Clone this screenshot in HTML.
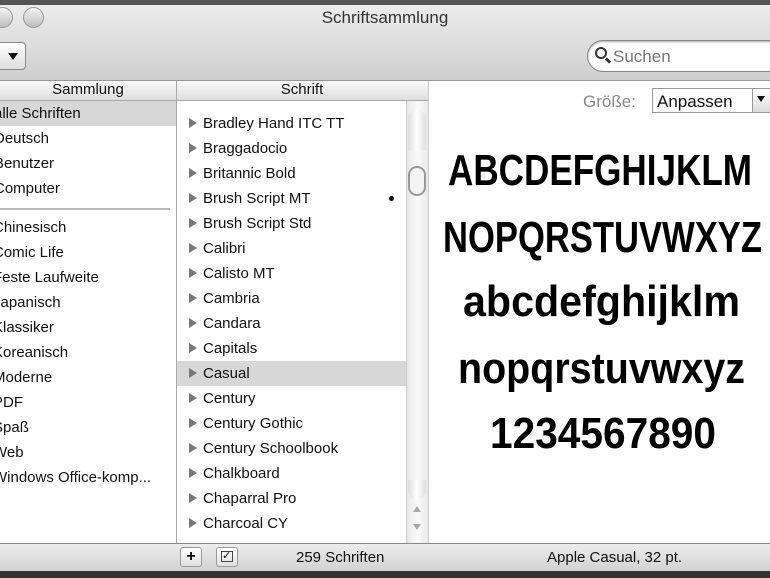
<!DOCTYPE html><html><head><style>
body{margin:0;width:770px;height:578px;overflow:hidden;background:#fff;font-family:"Liberation Sans",sans-serif;position:relative}
div,svg{position:absolute;box-sizing:border-box}
.t{font-size:15px;color:#111;white-space:nowrap}
.tri{display:inline-block;width:0;height:0;border-left:8px solid #777;border-top:5px solid transparent;border-bottom:5px solid transparent;margin-right:6px;vertical-align:0}
</style></head><body>
<div style="left:0;top:0;width:770px;height:6px;background:#555"></div>
<div style="left:0;top:5px;width:770px;height:76px;background:linear-gradient(#ececec,#cfcfcf);border-bottom:1px solid #999"></div>
<div style="left:-8px;top:7px;width:21px;height:21px;border-radius:50%;background:linear-gradient(#f4f4f4,#bdbdbd);border:1px solid #999"></div>
<div style="left:23px;top:7px;width:21px;height:21px;border-radius:50%;background:linear-gradient(#f4f4f4,#bdbdbd);border:1px solid #999"></div>
<div class="t" style="left:0;width:770px;top:8px;text-align:center;font-size:17px;color:#333">Schriftsammlung</div>
<div style="left:-6px;top:42px;width:32px;height:28px;border:1px solid #888;border-radius:4px;background:linear-gradient(#fff,#ddd)"></div>
<div style="left:8px;top:53px;border-left:5px solid transparent;border-right:5px solid transparent;border-top:7px solid #111"></div>
<div style="left:587px;top:40px;width:200px;height:32px;border:1px solid #888;border-radius:16px;background:#fff;box-shadow:inset 0 1px 2px #aaa"></div>
<div style="left:595px;top:47px;width:12px;height:12px;border:2px solid #333;border-radius:50%"></div>
<div style="left:605px;top:59px;width:6px;height:3px;background:#333;transform:rotate(45deg)"></div>
<div class="t" style="left:613px;top:47px;font-size:17px;color:#777">Suchen</div>
<div style="left:0;top:81px;width:428px;height:20px;background:linear-gradient(#fafafa,#dedede);border-bottom:1px solid #aaa"></div>
<div style="left:176px;top:81px;width:1px;height:462px;background:#aaa"></div>
<div style="left:428px;top:81px;width:1px;height:462px;background:#ccc"></div>
<div class="t" style="left:0;width:176px;top:81px;text-align:center">Sammlung</div>
<div class="t" style="left:176px;width:252px;top:81px;text-align:center">Schrift</div>
<div style="left:0;top:101px;width:176px;height:25px;background:#d7d7d7"></div>
<div class="t" style="left:-6px;top:101px;line-height:25px">
<div style="position:static">alle Schriften</div><div style="position:static">Deutsch</div><div style="position:static">Benutzer</div><div style="position:static">Computer</div></div>
<div style="left:0;top:208px;width:170px;height:2px;background:#bbb"></div>
<div class="t" style="left:-7px;top:215px;line-height:25px">
<div style="position:static">Chinesisch</div><div style="position:static">Comic Life</div><div style="position:static">Feste Laufweite</div><div style="position:static">Japanisch</div><div style="position:static">Klassiker</div><div style="position:static">Koreanisch</div><div style="position:static">Moderne</div><div style="position:static">PDF</div><div style="position:static">Spaß</div><div style="position:static">Web</div><div style="position:static">Windows Office-komp...</div></div>
<div style="left:177px;top:101px;width:229px;height:6px;overflow:hidden"><div class="t" style="left:12px;top:-14px">▸ Bordeaux Rm Bold LET</div></div>
<div style="left:177px;top:361px;width:229px;height:25px;background:#d7d7d7"></div>
<div class="t" style="left:189px;top:111px;line-height:25px">
<div style="position:static"><span class="tri"></span>Bradley Hand ITC TT</div>
<div style="position:static"><span class="tri"></span>Braggadocio</div>
<div style="position:static"><span class="tri"></span>Britannic Bold</div>
<div style="position:static"><span class="tri"></span>Brush Script MT</div>
<div style="position:static"><span class="tri"></span>Brush Script Std</div>
<div style="position:static"><span class="tri"></span>Calibri</div>
<div style="position:static"><span class="tri"></span>Calisto MT</div>
<div style="position:static"><span class="tri"></span>Cambria</div>
<div style="position:static"><span class="tri"></span>Candara</div>
<div style="position:static"><span class="tri"></span>Capitals</div>
<div style="position:static"><span class="tri"></span>Casual</div>
<div style="position:static"><span class="tri"></span>Century</div>
<div style="position:static"><span class="tri"></span>Century Gothic</div>
<div style="position:static"><span class="tri"></span>Century Schoolbook</div>
<div style="position:static"><span class="tri"></span>Chalkboard</div>
<div style="position:static"><span class="tri"></span>Chaparral Pro</div>
<div style="position:static"><span class="tri"></span>Charcoal CY</div></div>
<div style="left:389px;top:196px;width:5px;height:5px;border-radius:50%;background:#000"></div>
<div style="left:406px;top:101px;width:22px;height:442px;background:linear-gradient(90deg,#e8e8e8,#fafafa,#e8e8e8);border-left:1px solid #ccc"></div>
<div style="left:408px;top:110px;width:18px;height:40px;border-radius:9px 9px 0 0;background:linear-gradient(90deg,#ddd,#fff,#ddd)"></div>
<div style="left:408px;top:166px;width:18px;height:30px;border-radius:9px;border:2px solid #999;background:#f4f4f4"></div>
<div style="left:408px;top:480px;width:18px;height:20px;border-radius:0 0 9px 9px;background:linear-gradient(90deg,#ddd,#fff,#ddd)"></div>
<div style="left:413px;top:506px;border-left:4px solid transparent;border-right:4px solid transparent;border-bottom:6px solid #aaa"></div>
<div style="left:413px;top:524px;border-left:4px solid transparent;border-right:4px solid transparent;border-top:6px solid #aaa"></div>
<div class="t" style="left:583px;top:92px;font-size:17px;color:#888">Größe:</div>
<div style="left:652px;top:88px;width:130px;height:25px;border:1px solid #999;background:#fff"></div>
<div class="t" style="left:657px;top:92px;font-size:17px">Anpassen</div>
<div style="left:752px;top:89px;width:20px;height:23px;border-left:1px solid #999;background:linear-gradient(#fff,#ddd)"></div>
<div style="left:757px;top:96px;border-left:4px solid transparent;border-right:4px solid transparent;border-top:6px solid #111"></div>
<svg style="left:0;top:0" width="770" height="578" font-family="Liberation Sans, sans-serif" font-weight="bold" font-size="44" fill="#000">
<text x="448" y="185" textLength="304" lengthAdjust="spacingAndGlyphs">ABCDEFGHIJKLM</text>
<text x="443" y="252" textLength="319" lengthAdjust="spacingAndGlyphs">NOPQRSTUVWXYZ</text>
<text x="463" y="316" textLength="277" lengthAdjust="spacingAndGlyphs">abcdefghijklm</text>
<text x="458" y="383" textLength="287" lengthAdjust="spacingAndGlyphs">nopqrstuvwxyz</text>
<text x="490" y="448" textLength="226" lengthAdjust="spacingAndGlyphs">1234567890</text>
</svg>
<div style="left:0;top:543px;width:770px;height:28px;background:linear-gradient(#ececec,#d2d2d2);border-top:1px solid #888"></div>
<div style="left:180px;top:547px;width:22px;height:20px;border:1px solid #999;border-radius:3px;background:linear-gradient(#fff,#e0e0e0);text-align:center;font-weight:bold;font-size:16px;line-height:18px">+</div>
<div style="left:216px;top:547px;width:22px;height:20px;border:1px solid #999;border-radius:3px;background:linear-gradient(#fff,#e0e0e0)"></div>
<div style="left:221px;top:551px;width:12px;height:11px;border:1.5px solid #444"></div>
<div class="t" style="left:222px;top:549px;font-size:11px">✓</div>
<div class="t" style="left:296px;top:549px">259 Schriften</div>
<div class="t" style="left:547px;top:549px">Apple Casual, 32 pt.</div>
<div style="left:0;top:571px;width:770px;height:7px;background:#333"></div>
</body></html>
